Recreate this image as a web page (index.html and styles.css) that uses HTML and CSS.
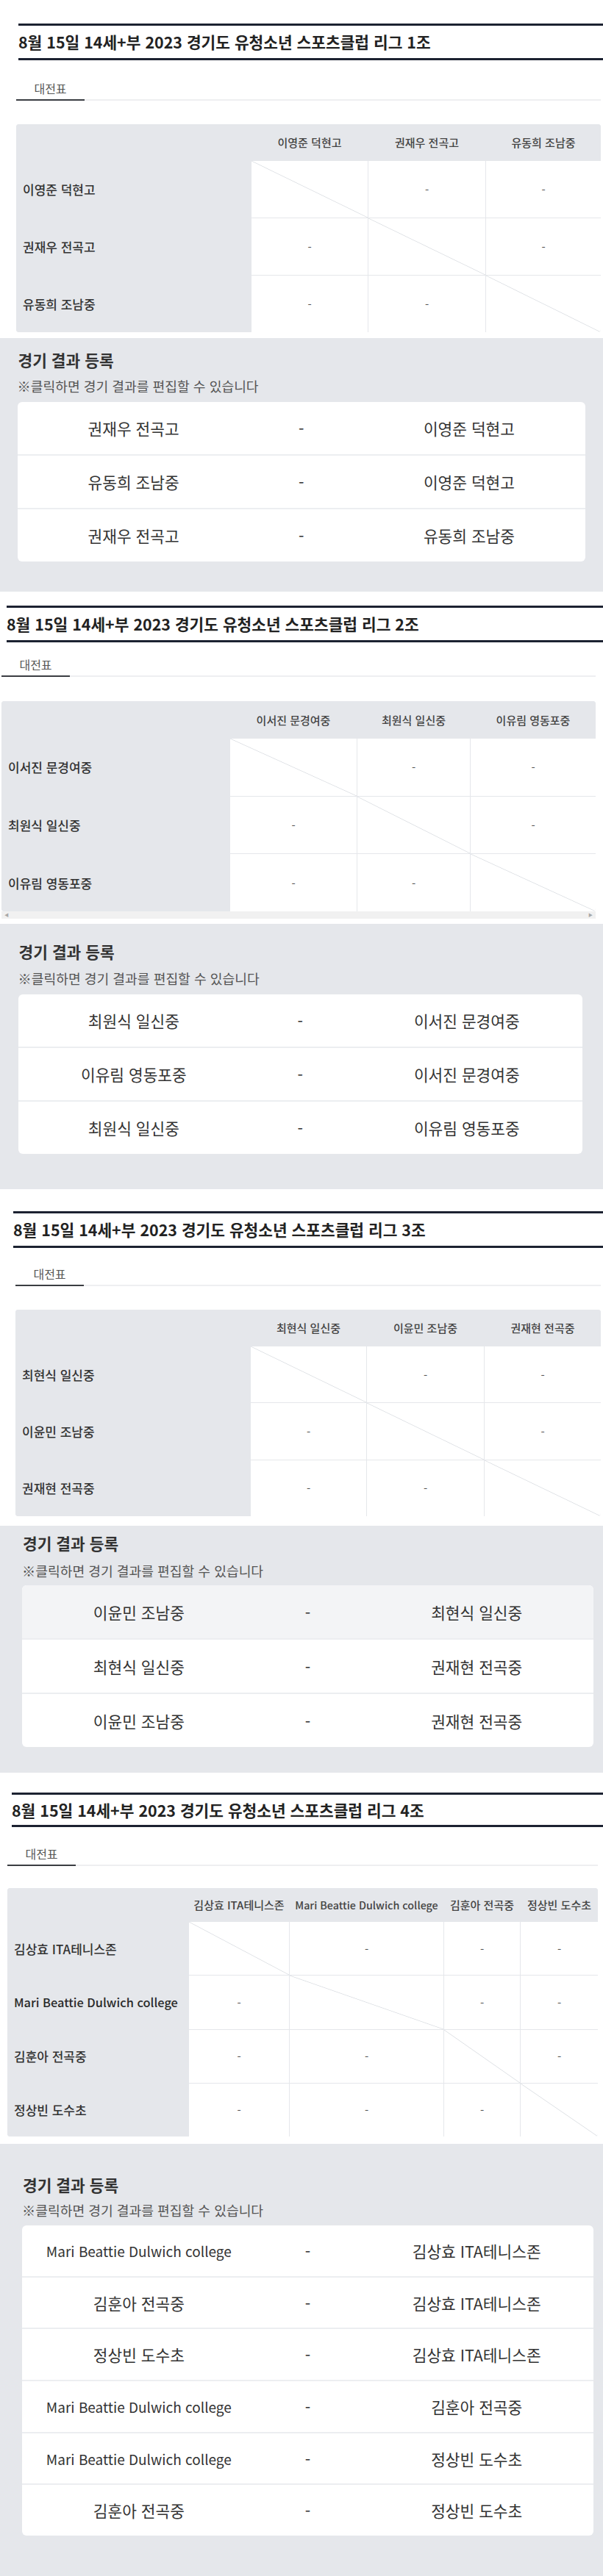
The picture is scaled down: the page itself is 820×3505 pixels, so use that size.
FILE: index.html
```html
<!DOCTYPE html>
<html lang="ko">
<head>
<meta charset="utf-8">
<title>리그 대전표</title>
<link rel="stylesheet" href="styles.css">
</head>
<body>
<main class="page">

  <section class="league league--1">
    <h2 class="league__title">8월 15일 14세+부 2023 경기도 유청소년 스포츠클럽 리그 1조</h2>
    <div class="tabs"><span class="tab">대전표</span></div>
    <div class="board">
      <div class="board__corner"></div>
      <div class="board__head">이영준 덕현고</div>
      <div class="board__head">권재우 전곡고</div>
      <div class="board__head">유동희 조남중</div>
      <div class="board__label">이영준 덕현고</div>
      <div class="board__cell board__cell--self"></div>
      <div class="board__cell">-</div>
      <div class="board__cell">-</div>
      <div class="board__label">권재우 전곡고</div>
      <div class="board__cell">-</div>
      <div class="board__cell board__cell--self"></div>
      <div class="board__cell">-</div>
      <div class="board__label">유동희 조남중</div>
      <div class="board__cell">-</div>
      <div class="board__cell">-</div>
      <div class="board__cell board__cell--self"></div>
    </div>
  </section>
  <section class="results results--1">
    <h3 class="results__title">경기 결과 등록</h3>
    <p class="results__hint">※클릭하면 경기 결과를 편집할 수 있습니다</p>
    <div class="results__card">
      <div class="match"><span class="match__side">권재우 전곡고</span><span class="match__side">-</span><span class="match__side">이영준 덕현고</span></div>
      <div class="match"><span class="match__side">유동희 조남중</span><span class="match__side">-</span><span class="match__side">이영준 덕현고</span></div>
      <div class="match"><span class="match__side">권재우 전곡고</span><span class="match__side">-</span><span class="match__side">유동희 조남중</span></div>
    </div>
  </section>

  <section class="league league--2">
    <h2 class="league__title">8월 15일 14세+부 2023 경기도 유청소년 스포츠클럽 리그 2조</h2>
    <div class="tabs"><span class="tab">대전표</span></div>
    <div class="board">
      <div class="board__corner"></div>
      <div class="board__head">이서진 문경여중</div>
      <div class="board__head">최원식 일신중</div>
      <div class="board__head">이유림 영동포중</div>
      <div class="board__label">이서진 문경여중</div>
      <div class="board__cell board__cell--self"></div>
      <div class="board__cell">-</div>
      <div class="board__cell">-</div>
      <div class="board__label">최원식 일신중</div>
      <div class="board__cell">-</div>
      <div class="board__cell board__cell--self"></div>
      <div class="board__cell">-</div>
      <div class="board__label">이유림 영동포중</div>
      <div class="board__cell">-</div>
      <div class="board__cell">-</div>
      <div class="board__cell board__cell--self"></div>
    </div>
    <div class="board-scroll"><span class="board-scroll__arrow">◀</span><span class="board-scroll__arrow">▶</span></div>
  </section>
  <section class="results results--2">
    <h3 class="results__title">경기 결과 등록</h3>
    <p class="results__hint">※클릭하면 경기 결과를 편집할 수 있습니다</p>
    <div class="results__card">
      <div class="match"><span class="match__side">최원식 일신중</span><span class="match__side">-</span><span class="match__side">이서진 문경여중</span></div>
      <div class="match"><span class="match__side">이유림 영동포중</span><span class="match__side">-</span><span class="match__side">이서진 문경여중</span></div>
      <div class="match"><span class="match__side">최원식 일신중</span><span class="match__side">-</span><span class="match__side">이유림 영동포중</span></div>
    </div>
  </section>

  <section class="league league--3">
    <h2 class="league__title">8월 15일 14세+부 2023 경기도 유청소년 스포츠클럽 리그 3조</h2>
    <div class="tabs"><span class="tab">대전표</span></div>
    <div class="board">
      <div class="board__corner"></div>
      <div class="board__head">최현식 일신중</div>
      <div class="board__head">이윤민 조남중</div>
      <div class="board__head">권재현 전곡중</div>
      <div class="board__label">최현식 일신중</div>
      <div class="board__cell board__cell--self"></div>
      <div class="board__cell">-</div>
      <div class="board__cell">-</div>
      <div class="board__label">이윤민 조남중</div>
      <div class="board__cell">-</div>
      <div class="board__cell board__cell--self"></div>
      <div class="board__cell">-</div>
      <div class="board__label">권재현 전곡중</div>
      <div class="board__cell">-</div>
      <div class="board__cell">-</div>
      <div class="board__cell board__cell--self"></div>
    </div>
  </section>
  <section class="results results--3">
    <h3 class="results__title">경기 결과 등록</h3>
    <p class="results__hint">※클릭하면 경기 결과를 편집할 수 있습니다</p>
    <div class="results__card">
      <div class="match match--active"><span class="match__side">이윤민 조남중</span><span class="match__side">-</span><span class="match__side">최현식 일신중</span></div>
      <div class="match"><span class="match__side">최현식 일신중</span><span class="match__side">-</span><span class="match__side">권재현 전곡중</span></div>
      <div class="match"><span class="match__side">이윤민 조남중</span><span class="match__side">-</span><span class="match__side">권재현 전곡중</span></div>
    </div>
  </section>

  <section class="league league--4">
    <h2 class="league__title">8월 15일 14세+부 2023 경기도 유청소년 스포츠클럽 리그 4조</h2>
    <div class="tabs"><span class="tab">대전표</span></div>
    <div class="board">
      <div class="board__corner"></div>
      <div class="board__head">김상효 ITA테니스존</div>
      <div class="board__head board__head--latin">Mari Beattie Dulwich college</div>
      <div class="board__head">김훈아 전곡중</div>
      <div class="board__head">정상빈 도수초</div>
      <div class="board__label">김상효 ITA테니스존</div>
      <div class="board__cell board__cell--self"></div>
      <div class="board__cell">-</div>
      <div class="board__cell">-</div>
      <div class="board__cell">-</div>
      <div class="board__label board__label--latin">Mari Beattie Dulwich college</div>
      <div class="board__cell">-</div>
      <div class="board__cell board__cell--self"></div>
      <div class="board__cell">-</div>
      <div class="board__cell">-</div>
      <div class="board__label">김훈아 전곡중</div>
      <div class="board__cell">-</div>
      <div class="board__cell">-</div>
      <div class="board__cell board__cell--self"></div>
      <div class="board__cell">-</div>
      <div class="board__label">정상빈 도수초</div>
      <div class="board__cell">-</div>
      <div class="board__cell">-</div>
      <div class="board__cell">-</div>
      <div class="board__cell board__cell--self"></div>
    </div>
  </section>
  <section class="results results--4">
    <h3 class="results__title">경기 결과 등록</h3>
    <p class="results__hint">※클릭하면 경기 결과를 편집할 수 있습니다</p>
    <div class="results__card">
      <div class="match"><span class="match__side match__side--latin">Mari Beattie Dulwich college</span><span class="match__side">-</span><span class="match__side">김상효 ITA테니스존</span></div>
      <div class="match"><span class="match__side">김훈아 전곡중</span><span class="match__side">-</span><span class="match__side">김상효 ITA테니스존</span></div>
      <div class="match"><span class="match__side">정상빈 도수초</span><span class="match__side">-</span><span class="match__side">김상효 ITA테니스존</span></div>
      <div class="match"><span class="match__side match__side--latin">Mari Beattie Dulwich college</span><span class="match__side">-</span><span class="match__side">김훈아 전곡중</span></div>
      <div class="match"><span class="match__side match__side--latin">Mari Beattie Dulwich college</span><span class="match__side">-</span><span class="match__side">정상빈 도수초</span></div>
      <div class="match"><span class="match__side">김훈아 전곡중</span><span class="match__side">-</span><span class="match__side">정상빈 도수초</span></div>
    </div>
  </section>

</main>
</body>
</html>
```

FILE: styles.css
```css
* {
  box-sizing: border-box;
}

html,
body {
  margin: 0;
  padding: 0;
}

body {
  width: 820px;
  overflow-x: hidden;
  background: #ffffff;
  font-family: "Noto Sans CJK KR", "Noto Sans", sans-serif;
  color: #333333;
}

.page {
  padding-top: 32px;
}

/* ---------- league header ---------- */

.league {
  margin-top: var(--league-mt, 0);
}

.league__title {
  margin: 0 0 0 var(--title-x);
  height: calc(var(--title-h, 44px) + 6px);
  border-top: 3px solid #1c2231;
  border-bottom: 3px solid #1c2231;
  line-height: var(--title-h, 44px);
  font-size: 21.4px;
  font-weight: 700;
  color: #222222;
  white-space: nowrap;
}

.tabs {
  display: flex;
  margin: var(--tabs-mt) 0 0 var(--board-x);
  width: var(--board-w);
  border-bottom: 2px solid #eeeff1;
}

.tab {
  width: 93px;
  margin-bottom: -2px;
  padding: 8px 0 4px;
  line-height: 22px;
  font-size: 16px;
  color: #555555;
  text-align: center;
  border-bottom: 2px solid #3a3d42;
}

/* ---------- board (round robin table) ---------- */

.board {
  display: grid;
  grid-template-columns: var(--cols);
  grid-template-rows: var(--head-h);
  grid-auto-rows: var(--row-h);
  gap: 1px;
  margin: var(--board-mt) 0 0 var(--board-x);
  width: var(--board-w);
  background: #e5e7eb;
  border-radius: 4px;
  overflow: hidden;
}

.board__corner {
  background: #e5e7eb;
}

.board__head {
  display: flex;
  align-items: center;
  justify-content: center;
  background: #e5e7eb;
  font-size: 15px;
  font-weight: 500;
  color: #444444;
  white-space: nowrap;
}

.board__head--latin {
  font-size: 14.3px;
}

.board__label {
  display: flex;
  align-items: center;
  padding-left: 9px;
  background: #e5e7eb;
  font-size: 17px;
  font-weight: 500;
  color: #333333;
  white-space: nowrap;
}

.board__label--latin {
  font-size: 16.4px;
  color: #2a2a2a;
}

.board__cell {
  display: flex;
  align-items: center;
  justify-content: center;
  background: #ffffff;
  font-size: 15px;
  color: #555555;
}

.board__cell--self {
  background: linear-gradient(to top right, #ffffff calc(50% - 0.8px), #dde0e4 50%, #ffffff calc(50% + 0.8px));
}

.board-scroll {
  display: flex;
  align-items: center;
  justify-content: space-between;
  margin-left: var(--board-x);
  width: var(--board-w);
  height: 10px;
  padding: 0 4px;
  background: #f1f1f1;
}

.board-scroll__arrow {
  font-size: 6px;
  line-height: 6px;
  color: #a8a8a8;
}

/* ---------- results ---------- */

.results {
  margin-top: var(--res-mt);
  padding: var(--res-pt) var(--res-pr) var(--res-pb) var(--res-pl);
  background: #e5e7eb;
}

.results__title {
  margin: 0;
  padding-left: 1px;
  font-size: 21.4px;
  line-height: 28px;
  font-weight: 700;
  color: #333333;
}

.results__hint {
  margin: var(--hint-mt) 0 0;
  font-size: 18.2px;
  line-height: 24px;
  color: #555555;
  white-space: nowrap;
}

.results__card {
  margin-top: var(--card-mt);
  background: #ffffff;
  border-radius: 6px;
  overflow: hidden;
}

.match {
  box-sizing: content-box;
  display: grid;
  grid-template-columns: repeat(3, minmax(0, 1fr));
  align-items: center;
  height: var(--match-h);
  padding: 0 44px;
  font-size: 21.4px;
  color: #333333;
  cursor: pointer;
}

.match + .match {
  border-top: 2px solid #eceef1;
}

.match--active {
  background: #f3f4f6;
}

.match__side {
  display: flex;
  justify-content: center;
  white-space: nowrap;
}

.match__side--latin {
  font-size: 19px;
}

/* ---------- per-league geometry ---------- */

.league--1 {
  --title-x: 25px;
  --tabs-mt: 19px;
  --board-x: 22px;
  --board-w: 795px;
  --board-mt: 32px;
  --cols: 319px 158px 159px 156px;
  --head-h: 49px;
  --row-h: 77px;
}

.results--1 {
  --res-mt: 8px;
  --res-pt: 16px;
  --res-pb: 41px;
  --res-pl: 23.5px;
  --res-pr: 24px;
  --hint-mt: 9px;
  --card-mt: 10px;
  --match-h: 71px;
}

.league--2 {
  --league-mt: 19px;
  --title-x: 9px;
  --tabs-mt: 11px;
  --board-x: 2px;
  --board-w: 808px;
  --board-mt: 33px;
  --cols: 310px 172px 153px 170px;
  --head-h: 50px;
  --row-h: 77.7px;
}

.results--2 {
  --res-mt: 7px;
  --res-pt: 24px;
  --res-pb: 48px;
  --res-pl: 24.6px;
  --res-pr: 28px;
  --hint-mt: 10px;
  --card-mt: 10px;
  --match-h: 71px;
}

.league--3 {
  --league-mt: 30px;
  --title-x: 18px;
  --tabs-mt: 16px;
  --board-x: 21px;
  --board-w: 796px;
  --board-mt: 32px;
  --cols: 319px 157px 159px 158px;
  --head-h: 49px;
  --row-h: 76.33px;
}

.results--3 {
  --res-mt: 13px;
  --res-pt: 10px;
  --res-pb: 35px;
  --res-pl: 30px;
  --res-pr: 13px;
  --hint-mt: 11px;
  --card-mt: 8px;
  --match-h: 72px;
}

.league--4 {
  --league-mt: 27px;
  --title-x: 16px;
  --title-h: 41px;
  --tabs-mt: 17px;
  --board-x: 10px;
  --board-w: 803px;
  --board-mt: 30px;
  --cols: 246px 136px 209px 103px 105px;
  --head-h: 45px;
  --row-h: 72.25px;
}

.results--4 {
  --res-mt: 10px;
  --res-pt: 42px;
  --res-pb: 55px;
  --res-pl: 30px;
  --res-pr: 13px;
  --hint-mt: 8px;
  --card-mt: 9px;
  --match-h: 68.67px;
}
```
